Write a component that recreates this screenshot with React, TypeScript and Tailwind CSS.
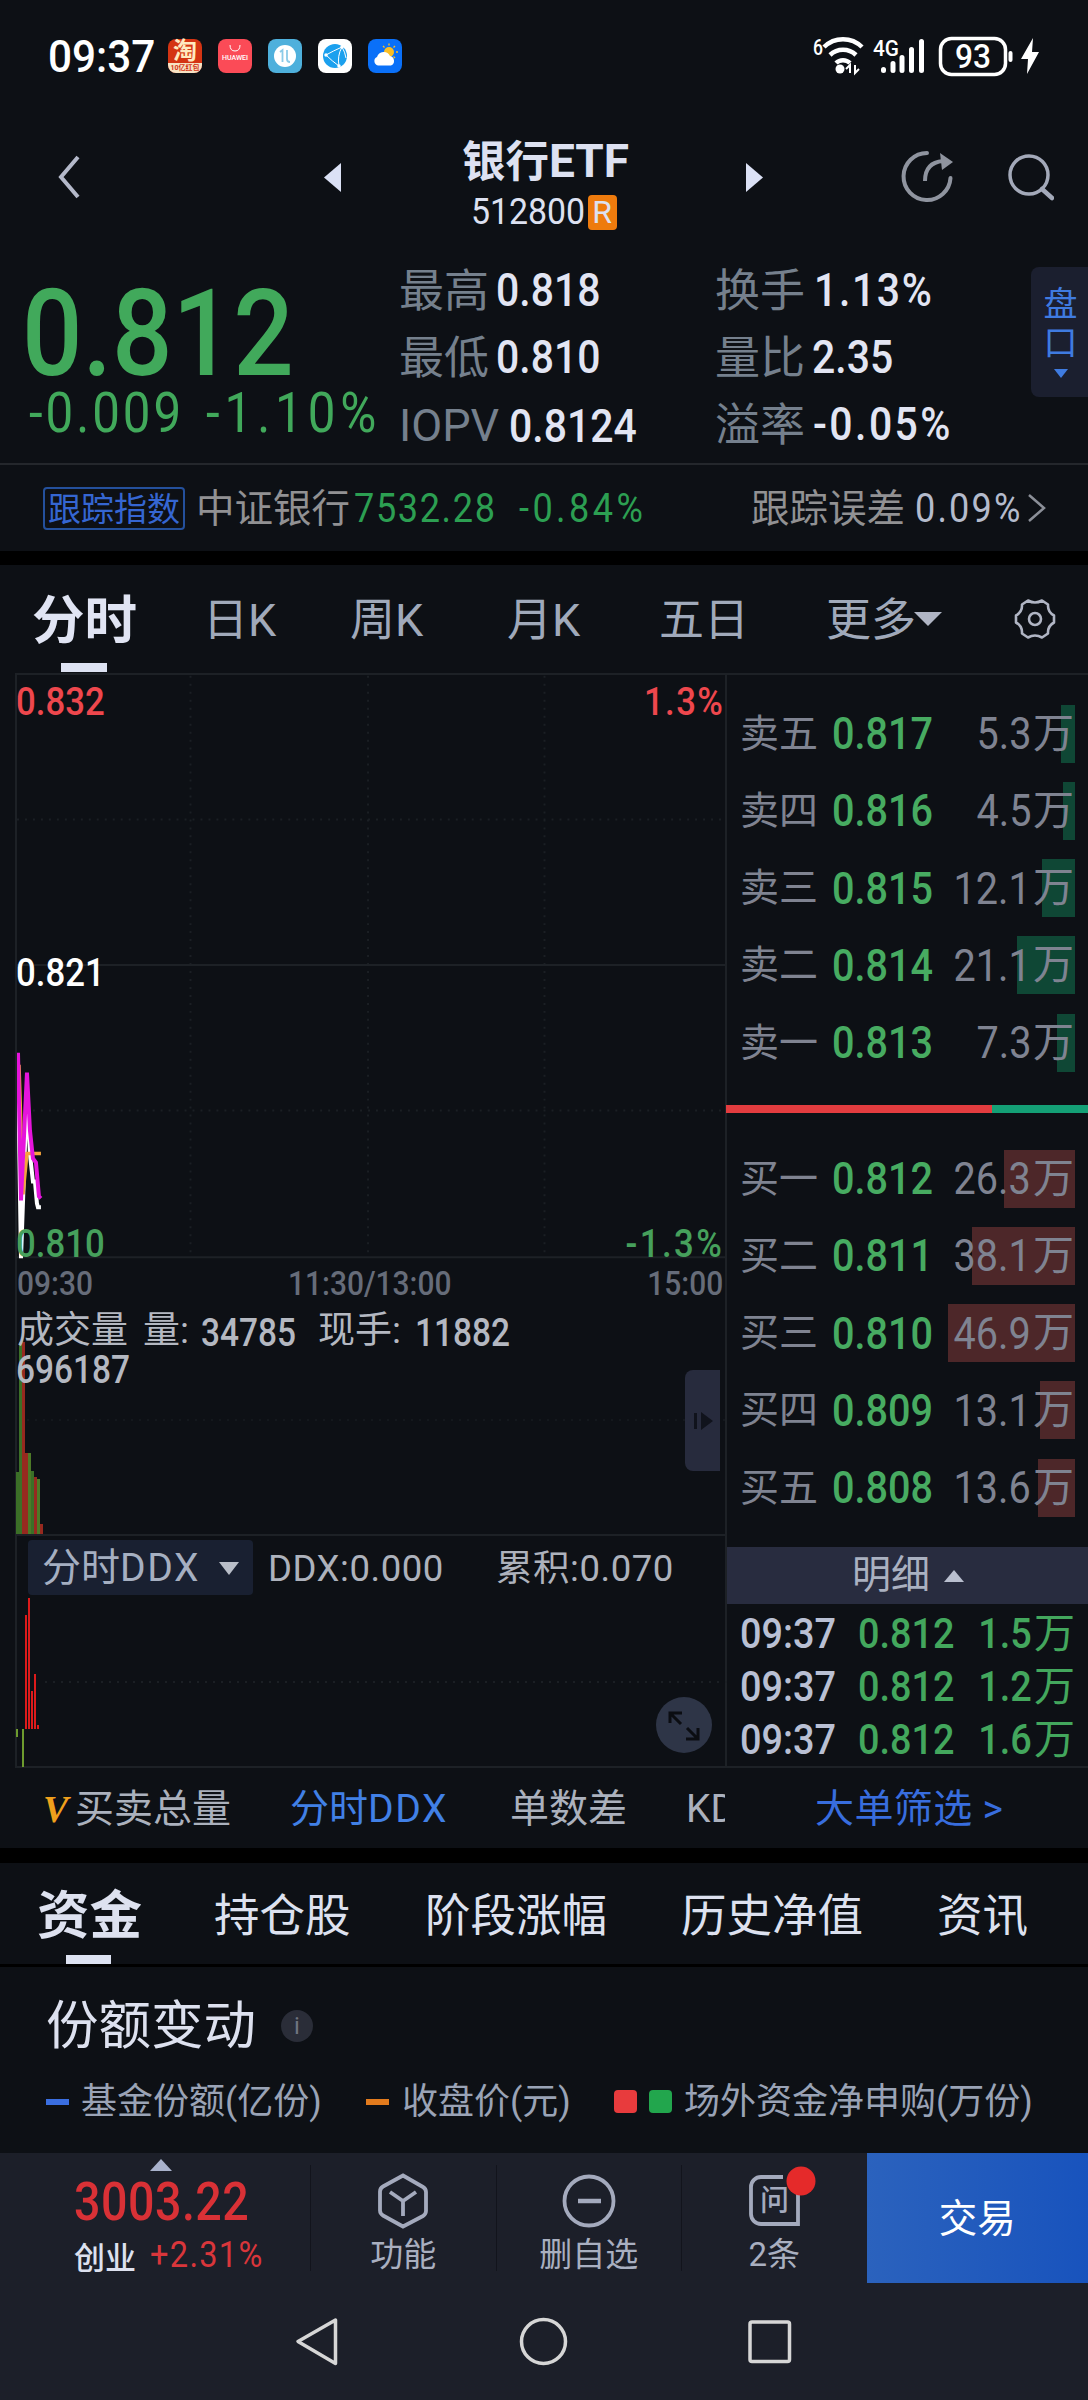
import type { ReactNode } from 'react';
import clsx from 'clsx';

type Level = { label: string; price: string; volume: string; bar: number };

const sells: Level[] = [
  { label: '卖五', price: '0.817', volume: '5.3', bar: 14 },
  { label: '卖四', price: '0.816', volume: '4.5', bar: 12 },
  { label: '卖三', price: '0.815', volume: '12.1', bar: 33 },
  { label: '卖二', price: '0.814', volume: '21.1', bar: 58 },
  { label: '卖一', price: '0.813', volume: '7.3', bar: 18 },
];

const buys: Level[] = [
  { label: '买一', price: '0.812', volume: '26.3', bar: 71 },
  { label: '买二', price: '0.811', volume: '38.1', bar: 103 },
  { label: '买三', price: '0.810', volume: '46.9', bar: 127 },
  { label: '买四', price: '0.809', volume: '13.1', bar: 35 },
  { label: '买五', price: '0.808', volume: '13.6', bar: 37 },
];

const trades = ['1.5', '1.2', '1.6'];

// [x, top, color], all bars stand on the same base line
const volumeBars: [number, number, string][] = [
  [0, 170, '#3b6f27'],
  [3, 40, '#3b6f27'],
  [6, 40, '#96291f'],
  [9, 151, '#96291f'],
  [12, 151, '#4c7a27'],
  [15, 169, '#3b6f27'],
  [18, 175, '#96291f'],
  [21, 177, '#4c7a27'],
  [24, 222, '#96291f'],
];

// condensed figures: the wrapper keeps the layout width, the inner span squeezes the glyphs
function Num({ children, className, right }: { children: ReactNode; className?: string; right?: boolean }) {
  return (
    <span className={clsx('inline-flex shrink-0 whitespace-nowrap', right && 'justify-end', className)}>
      <span className={clsx('inline-block scale-x-[.88]', right ? 'origin-right' : 'origin-left')}>{children}</span>
    </span>
  );
}

function StatusBar() {
  return (
    <header className="flex h-[112px] items-center pl-[48px] text-white">
      <span className="w-[120px] text-[45px] font-medium">
        <span className="inline-block origin-left scale-x-[.94]">09:37</span>
      </span>
      <div className="flex gap-4">
        <span className="flex size-[34px] flex-col items-center rounded-lg bg-[#d43413] text-[24px] font-bold text-[#ffe9c0]">
          淘
          <span className="flex h-2.5 w-full shrink-0 items-center justify-center rounded-b-lg bg-[#f6e3c4] text-[7px] text-[#d43413]">
            10亿红包
          </span>
        </span>
        <span className="flex size-[34px] flex-col items-center rounded-lg bg-[#fb4b57] text-[7px] font-medium">
          <svg viewBox="0 0 34 16" className="h-4 w-full" fill="none" stroke="#fff">
            <path d="M12 6 q0 6 5 6 t5 -6" />
          </svg>
          HUAWEI
        </span>
        <svg viewBox="0 0 34 34" className="size-[34px]">
          <rect width="34" height="34" rx="8" fill="#4eb0dc" />
          <circle cx="17" cy="17" r="11" fill="#fff" />
          <path d="M12 13l2.500-2v12M19 11v9q0 3 3 3" fill="none" stroke="#8ccbe8" strokeWidth="1.800" />
        </svg>
        <svg viewBox="0 0 34 34" className="size-[34px]">
          <rect width="34" height="34" rx="8" fill="#fff" />
          <circle cx="17" cy="17" r="12" fill="#1ba0ee" />
          <path d="M8 16Q15 12 24 8M8 16Q14 22 21 27M24 8Q19 17 21 27M24 8Q27 13 28 19" fill="none" stroke="#fff" />
          <path d="M8 16h.01M24 8h.01M21 27h.01" stroke="#fff" strokeWidth="3.500" strokeLinecap="round" />
        </svg>
        <svg viewBox="0 0 34 34" className="size-[34px]">
          <rect width="34" height="34" rx="8" fill="#0a70f8" />
          <circle cx="21" cy="13" r="5" fill="#fbbf24" />
          <path d="M21 4.500v2M27 7l-1.500 1.500M30 13h-2M15 7l1.500 1.500M27 19l-1.500-1.500" stroke="#fbbf24" strokeWidth="1.300" />
          <path d="M10 26.500a4.500 4.500 0 0 1-1-8.500 7 7 0 0 1 13-1 5 5 0 0 1 1 9.500z" fill="#fff" />
        </svg>
      </div>

      <svg viewBox="0 0 230 42" className="ml-[410px] h-[42px] w-[230px]" fill="none" stroke="#fff">
        <g strokeWidth="4.500">
          <path d="M12 12a27 27 0 0 1 38 0" />
          <path d="M18 20a19 19 0 0 1 26 0" />
          <path d="M24 28a10 10 0 0 1 14 0" />
        </g>
        <circle cx="28" cy="34" r="4.500" fill="#fff" stroke="none" />
        <path d="M38 38v-8l-4 4M43 30v8l4-4" strokeWidth="2" />
        <path d="M71.500 34.500v1M81 28.500v7M90 22.500v13M99.500 14.500v21M109.500 6.500v29" strokeWidth="5" strokeLinecap="round" />
        <rect x="128.500" y="3.500" width="65" height="36" rx="11" strokeWidth="3.500" />
        <path d="M198.500 18v7" strokeWidth="4" strokeLinecap="round" />
        <path d="M221 3l-12 21h7l-1 15 12-22h-7z" fill="#fff" stroke="none" />
        <g fill="#fff" stroke="none" className="font-medium">
          <text x="1" y="20" fontSize="22" textLength="10" lengthAdjust="spacingAndGlyphs">6</text>
          <text x="61" y="21" fontSize="22" textLength="26" lengthAdjust="spacingAndGlyphs">4G</text>
          <text x="143" y="33" fontSize="34" textLength="36" lengthAdjust="spacingAndGlyphs">93</text>
        </g>
      </svg>
    </header>
  );
}

function TitleBar() {
  return (
    <div className="flex h-[130px] items-center text-[#dde1f1]">
      <svg viewBox="0 0 24 44" className="ml-[57px] h-[44px] w-6" fill="none" stroke="#b4b9ca" strokeWidth="4">
        <path d="M21 2L4 22l17 20" />
      </svg>
      <svg viewBox="0 0 17 29" className="ml-[243px] h-[29px] w-[17px]" fill="#dbe1f5">
        <path d="M17 0v29L0 14.500z" />
      </svg>
      <div className="flex w-[405px] flex-col items-center">
        <h1 className="mt-[14px] ml-1 text-[43.500px] font-bold">
          银行<span className="text-[46px]">ETF</span>
        </h1>
        <div className="mt-[10px] flex items-center">
          <span className="inline-block w-[117px] text-[36px]">
            <span className="inline-block origin-left scale-x-[.94]">512800</span>
          </span>
          <span className="flex h-[35px] w-[29px] items-center justify-center rounded-sm bg-[#ee7b0d] text-[32px]">R</span>
        </div>
      </div>
      <svg viewBox="0 0 17 29" className="h-[29px] w-[17px]" fill="#dbe1f5">
        <path d="M0 0v29l17-14.500z" />
      </svg>
      <svg viewBox="0 0 54 54" className="ml-[137px] size-[54px]" fill="none" stroke="#8f949f" strokeWidth="4">
        <path d="M27 3a23.500 23.500 0 1 0 23.500 25" strokeLinecap="round" />
        <path d="M25 31c0-12 6-19 18-20" />
        <path d="M40 3l13 9-11 8z" fill="#8f949f" stroke="none" />
      </svg>
      <svg viewBox="0 0 48 48" className="ml-[52px] size-12" fill="none" stroke="#a3a9b9" strokeWidth="3.500">
        <circle cx="23" cy="22" r="19" />
        <path d="M36 36l10 9" strokeWidth="4.500" strokeLinecap="round" />
      </svg>
    </div>
  );
}

function Stat({ label, value, shift }: { label: string; value: string; shift?: string }) {
  return (
    <div className="flex h-[67px] items-center">
      <span className="pt-0.5 text-[45px] text-[#75808d]">{label}</span>
      <Num className={clsx('text-[46.500px] font-medium', shift ?? 'ml-[7px]')}>{value}</Num>
    </div>
  );
}

function Quote() {
  return (
    <section className="flex h-[221px] pt-[15px] text-[#e2e5f3]">
      <div className="w-[398px] pl-[22px] text-[#41a95b]">
        <Num className="mt-[29px] text-[121px] leading-[97px] font-medium">0.812</Num>
        <div className="flex pt-0.5 pl-[7px] text-[56px]">
          <Num className="w-[177px] tracking-[.06em]">-0.009</Num>
          <Num className="tracking-[.1em]">-1.10%</Num>
        </div>
      </div>
      <div className="w-[317px] pl-px">
        <Stat label="最高" value="0.818" />
        <Stat label="最低" value="0.810" />
        <Stat label="IOPV" value="0.8124" shift="ml-[10px] mt-1" />
      </div>
      <div className="w-[316px]">
        <Stat label="换手" value="1.13%" shift="ml-[9px] tracking-[.04em]" />
        <Stat label="量比" value="2.35" />
        <Stat label="溢率" value="-0.05%" shift="ml-[8px] tracking-[.06em]" />
      </div>
      <div className="mt-[10px] flex h-[130px] w-[57px] flex-col items-center rounded-l-lg bg-[#1b1f2f] pt-[20px] pl-0.5 text-[34px] text-[#3f7be0]">
        <span>盘</span>
        <span className="mt-[5px]">口</span>
        <svg viewBox="0 0 14 9" className="mt-[9px] h-[9px] w-[14px]" fill="currentColor">
          <path d="M0 0h14L7 9z" />
        </svg>
      </div>
    </section>
  );
}

function IndexRow() {
  return (
    <div className="flex h-[88px] items-center border-t-2 border-[#24272c] pl-[43px] text-[38.500px] text-[#919193]">
      <span className="flex h-[43px] w-[142px] items-center justify-center rounded-sm border-2 border-[#24509c] pt-0.5 text-[33px] text-[#3566d2]">
        跟踪指数
      </span>
      <span className="ml-[11px] w-[158px] pt-0.5">中证银行</span>
      <Num className="w-[165px] text-[41px] tracking-[.045em] text-[#2c9f52]">7532.28</Num>
      <Num className="w-[232px] text-[41px] tracking-[.095em] text-[#2c9f52]">-0.84%</Num>
      <span className="w-[164px] pt-0.5">跟踪误差</span>
      <Num className="w-[112px] text-[41px] tracking-[.06em] text-[#b4bbcc]">0.09%</Num>
      <svg viewBox="0 0 20 30" className="h-[30px] w-5" fill="none" stroke="#8b8f98" strokeWidth="2.500">
        <path d="M2 2l15 13L2 28" />
      </svg>
    </div>
  );
}

function PeriodTabs() {
  return (
    <nav className="flex h-[108px] items-center pl-[32px] text-[45px] text-[#a0a9ba]">
      <span className="relative w-[171px] pt-1 text-[52.500px] font-bold text-[#e0e4f3]">
        分时
        <i className="absolute top-[72px] left-[29px] h-[9px] w-[46px] bg-[#dde2f2]" />
      </span>
      <span className="w-[147px] pt-0.5">日K</span>
      <span className="w-[157px] pt-0.5">周K</span>
      <span className="w-[152px] pt-0.5">月K</span>
      <span className="w-[167px] pt-0.5">五日</span>
      <span className="pt-0.5">更多</span>
      <svg viewBox="0 0 28 14" className="-ml-0.5 h-[14px] w-7" fill="#b0b5c4">
        <path d="M0 0h28L14 14z" />
      </svg>
      <svg viewBox="0 0 42 42" className="ml-[72px] size-[42px]" fill="none" stroke="#b0b5c4" strokeWidth="2.600" strokeLinejoin="round">
        <path d="M14 2.500 Q21 6.500 28 2.500 L34 6.500 Q33.500 14 40 17.500 V24.500 Q33.500 28 34 35.500 L28 39.500 Q21 35.500 14 39.500 L8 35.500 Q8.500 28 2 24.500 V17.500 Q8.500 14 8 6.500 Z" />
        <circle cx="21" cy="21" r="6" />
      </svg>
    </nav>
  );
}

function PriceChart() {
  return (
    <div className="relative h-[585px] text-[39.500px] font-medium">
      <svg viewBox="0 0 710 585" className="h-full w-full" fill="none">
        <g stroke="#1b1f24" strokeWidth="2" strokeDasharray="2 6">
          <path d="M0 144h710M0 436h710M174 0v584M352 0v584M529 0v584" />
        </g>
        <path d="M0 290h710M0 583h710" stroke="#1d2126" strokeWidth="2" />
        <path d="M1 397L4 584 10 415l3 65 3 27h2l2 22 1 4h3" stroke="#fff" strokeWidth="4" />
        <path d="M2 390l4 130 4-41h14" stroke="#f5a43c" strokeWidth="3.500" />
        <path d="M1 378L4 526 10 398l3 58 3 28 3 4 3 34 2 2" stroke="#e614dc" strokeWidth="4" />
      </svg>
      <Num className="absolute top-[7px] -left-px text-[#ee474d]">0.832</Num>
      <Num className="absolute top-[7px] right-px tracking-[.04em] text-[#ee474d]" right>1.3%</Num>
      <Num className="absolute top-[278px] -left-px text-white">0.821</Num>
      <Num className="absolute top-[549px] -left-px text-[#46a05c]">0.810</Num>
      <Num className="absolute top-[549px] right-px tracking-[.07em] text-[#46a05c]" right>-1.3%</Num>
    </div>
  );
}

function VolumeChart() {
  return (
    <div className="relative h-[234px] border-b-2 border-[#1d2126] text-[37px] text-[#b4b8c1]">
      <svg viewBox="0 0 710 232" className="absolute inset-0 h-[232px] w-[710px] overflow-visible">
        <path d="M10 118h700" stroke="#14181d" strokeWidth="2" strokeDasharray="2 6" />
        {volumeBars.map(([x, top, color]) => (
          <rect key={x} x={x - 1} y={top} width="3" height={232 - top} fill={color} />
        ))}
      </svg>
      <div className="relative flex items-center pt-[6px]">
        <span className="w-[126px]">成交量</span>
        <span className="w-[58px]">量:</span>
        <Num className="mt-[6px] w-[117px] text-[38px] font-medium">34785</Num>
        <span className="w-[97px]">现手:</span>
        <Num className="mt-[6px] text-[38px] font-medium">11882</Num>
      </div>
      <Num className="relative -mt-px -ml-px text-[38px] font-medium">696187</Num>
      <span className="absolute top-[68px] right-[5px] flex h-[101px] w-[35px] items-center justify-center rounded-l-lg bg-[#272b3d]">
        <svg viewBox="0 0 22 18" className="h-[18px] w-[22px]" fill="#10131c">
          <path d="M2 1h3v16H2zM9 0l12 9-12 9z" />
        </svg>
      </span>
    </div>
  );
}

function DdxChart() {
  return (
    <div className="relative h-[232px] border-b-2 border-[#1d2126] text-[36.500px] text-[#adb2bc]">
      <svg viewBox="0 0 710 230" className="absolute inset-0 h-[230px] w-[710px] overflow-visible">
        <path d="M28 146h682" stroke="#1b1f24" strokeWidth="2" strokeDasharray="2 6" />
        <path d="M9 79v114M12 62v131M15 155v38M18 138v55M21 189v4" stroke="#dd1b1b" strokeWidth="2" />
        <path d="M0 193v8M6 193v38" stroke="#6d9b2e" strokeWidth="2" />
      </svg>
      <div className="relative flex items-center pt-[4px] pl-[11px]">
        <span className="flex h-[55px] w-[225px] items-center justify-between rounded-sm bg-[#192031] pt-0.5 pr-[14px] pl-[14px] text-[39px] text-[#a5afc1]">
          <span>
            分时<span className="tracking-[.04em]">DDX</span>
          </span>
          <svg viewBox="0 0 20 13" className="h-[13px] w-5" fill="#b9bec8">
            <path d="M0 0h20L10 13z" />
          </svg>
        </span>
        <span className="ml-[15px] w-[228px] pt-1 tracking-[.015em]">DDX:0.000</span>
        <span className="pt-1 tracking-[.015em]">累积:0.070</span>
      </div>
      <svg viewBox="0 0 56 56" className="absolute top-[161px] right-[13px] size-14" fill="none" stroke="#0b0d12" strokeWidth="3">
        <circle cx="28" cy="28" r="28" fill="#2e3547" stroke="none" />
        <path d="M14 26V16h12M15 17l10 10M42 31v11H30M41 41L31 31" />
      </svg>
    </div>
  );
}

function Book({ levels, sell }: { levels: Level[]; sell?: boolean }) {
  return (
    <ul>
      {levels.map(({ label, price, volume, bar }) => (
        <li key={label} className="relative flex h-[77.250px] items-center pl-[13px] text-[45px] text-[#7f8391]">
          <span
            className={clsx('absolute right-[13px] h-[58px]', sell ? 'bg-[#0f4735]' : 'bg-[#4d2729]')}
            style={{ width: bar }}
          />
          <span className="relative w-[92px] pt-px text-[39px]">{label}</span>
          <Num className="relative w-[105px] font-medium text-[#47ab61]">{price}</Num>
          <Num className="relative w-[94px]" right>{volume}</Num>
          <span className="relative ml-0.5 pt-px text-[41px]">万</span>
        </li>
      ))}
    </ul>
  );
}

function MarketDepth() {
  return (
    <aside className="flex w-[363px] flex-col border-t-2 border-l-2 border-[#1d2126]">
      <div className="h-[430px] pt-[20px]">
        <Book levels={sells} sell />
      </div>
      <div className="-ml-px flex h-2">
        <i className="w-[266px] bg-[#e23c3f]" />
        <i className="flex-1 bg-[#14a076]" />
      </div>
      <div className="h-[434px] pt-[27px]">
        <Book levels={buys} />
      </div>
      <div className="flex h-[57px] items-center bg-[#282c3f] pl-[125px] text-[39px] text-[#aab1c1]">
        明细
        <svg viewBox="0 0 20 12" className="ml-[14px] h-3 w-5" fill="#b9bfcf">
          <path d="M0 12h20L10 0z" />
        </svg>
      </div>
      <ul className="h-[164px] border-b-2 border-[#1d2126] pt-[3px] text-[43px] text-[#43a75d]">
        {trades.map((v) => (
          <li key={v} className="flex h-[53px] items-center pl-[13px]">
            <Num className="w-[118px] font-medium text-[#b9c0d4]">09:37</Num>
            <Num className="w-[110px] font-medium">0.812</Num>
            <Num className="w-[64px] font-medium" right>{v}</Num>
            <span className="ml-0.5 pt-px text-[41px]">万</span>
          </li>
        ))}
      </ul>
    </aside>
  );
}

function IndicatorTabs() {
  return (
    <div className="flex h-[80px] items-center pt-0.5 pl-[43px] text-[39px] text-[#abb1bd]">
      <span className="w-8 font-['Liberation_Serif',serif] text-[38px] font-bold text-[#f0a01c] italic">V</span>
      <span className="w-[215px]">买卖总量</span>
      <span className="w-[220px] text-[#4180e6]">
        分时<span className="tracking-[.04em]">DDX</span>
      </span>
      <span className="w-[176px]">单数差</span>
      <span className="w-[39px] overflow-hidden">KDJ</span>
      <span className="ml-[90px] tracking-[.01em] text-[#386dde]">大单筛选 &gt;</span>
    </div>
  );
}

function FundTabs() {
  return (
    <nav className="flex h-[104px] items-center border-b-[3px] border-black pt-[6px] pl-[37px] text-[45.500px] text-[#dde1ef]">
      <span className="relative w-[177px] text-[52.500px] font-bold">
        资金
        <i className="absolute top-[65px] left-[29px] h-[9px] w-[45px] bg-[#dde2f2]" />
      </span>
      <span className="w-[211px]">持仓股</span>
      <span className="w-[256px]">阶段涨幅</span>
      <span className="w-[256px]">历史净值</span>
      <span>资讯</span>
    </nav>
  );
}

function ShareChange() {
  return (
    <section className="h-[186px] text-[#dde1ef]">
      <div className="flex items-center pt-[33px] pl-[46px] text-[52.500px]">
        份额变动
        <span className="ml-[25px] flex size-8 items-center justify-center rounded-full bg-[#2a2d38] text-[24px] text-[#6f7480]">i</span>
      </div>
      <div className="mt-[31px] flex items-center pl-[46px] text-[36px] text-[#9aa3b6]">
        <i className="mr-[12px] h-[6px] w-[23px] bg-[#3a6ee0]" />
        <span className="w-[285px]">基金份额(亿份)</span>
        <i className="mr-[13px] h-[6px] w-[23px] bg-[#e27b1d]" />
        <span className="w-[212px]">收盘价(元)</span>
        <i className="mr-3 size-[23px] rounded-sm bg-[#e83b3d]" />
        <i className="mr-[12px] size-[23px] rounded-sm bg-[#22a64d]" />
        <span className="whitespace-nowrap">场外资金净申购(万份)</span>
      </div>
    </section>
  );
}

function FooterItem({ label, children }: { label: string; children: ReactNode }) {
  return (
    <div className="flex w-[185.500px] flex-col items-center border-l border-[#12141c] text-[33px] text-[#a9afc0]">
      <svg viewBox="0 0 60 60" className="mt-[4px] mb-[9px] size-[60px] overflow-visible" fill="none" stroke="#a4aabd" strokeWidth="3.800">
        {children}
      </svg>
      {label}
    </div>
  );
}

function Footer() {
  return (
    <footer className="h-[247px] bg-[#1c1f29]">
      <div className="flex h-[130px]">
        <div className="relative w-[310px] pt-[23px] pl-[74px]">
          <svg viewBox="0 0 22 12" className="absolute top-[6px] left-[150px] h-3 w-[22px]" fill="#a9b2cc">
            <path d="M0 12h22L11 0z" />
          </svg>
          <Num className="text-[53px] font-medium tracking-[.01em] text-[#d93136]">3003.22</Num>
          <div className="mt-[10px] flex items-center">
            <span className="w-[76px] pt-1 text-[31px] font-medium text-[#dde1ef]">创业</span>
            <Num className="-mt-1 text-[37px] tracking-[.04em] text-[#d9363b]">+2.31%</Num>
          </div>
        </div>
        <div className="flex py-[12px]">
          <FooterItem label="功能">
            <path d="M30 6l20 11.500a6 6 0 0 1 3 5v19a6 6 0 0 1-3 5L30 57 10 46a6 6 0 0 1-3-5V22a6 6 0 0 1 3-5z" transform="translate(0 .5)" />
            <path d="M17 23l13 9 13-9M30 32v15" />
          </FooterItem>
          <FooterItem label="删自选">
            <circle cx="30" cy="32" r="24.500" />
            <path d="M19 32h23" strokeWidth="4.500" />
          </FooterItem>
          <FooterItem label="2条">
            <path d="M54 24v31H17a10 10 0 0 1-10-10V18A10 10 0 0 1 17 8h22" />
            <text x="16" y="42" fontSize="29" fill="#a4aabd" stroke="none" className="font-medium">问</text>
            <circle cx="57" cy="12" r="14.500" fill="#e52a2a" stroke="none" />
          </FooterItem>
        </div>
        <button className="flex flex-1 items-center justify-center bg-gradient-to-r from-[#2b62bd] to-[#1853bd] pt-0.5 text-[38.500px] text-white">
          交易
        </button>
      </div>
      <svg viewBox="0 0 1088 117" className="h-[117px] w-full" fill="none" stroke="#d6d6d6" strokeWidth="3.500" strokeLinejoin="round">
        <path d="M335.500 37v43.500L298 58.500z" />
        <circle cx="543.500" cy="58.500" r="22" />
        <rect x="750" y="39" width="39.500" height="39.500" rx="2" />
      </svg>
    </footer>
  );
}

export default function App() {
  return (
    <main className="w-[1088px] overflow-hidden bg-[#0d1015] font-['Roboto','Noto_Sans_CJK_SC',sans-serif] leading-none whitespace-nowrap">
      <StatusBar />
      <TitleBar />
      <Quote />
      <IndexRow />
      <div className="h-[14px] bg-black" />
      <PeriodTabs />
      <div className="flex h-[1095px]">
        <div className="ml-[15px] w-[710px] border-t-2 border-l-2 border-[#1d2126]">
          <PriceChart />
          <div className="flex h-[42px] items-center justify-between pt-1 pr-0.5 text-[34px] text-[#666c79]">
            <Num className="w-[75px] font-medium">09:30</Num>
            <Num className="w-[164px] font-medium">11:30/13:00</Num>
            <Num className="w-[75px] font-medium" right>15:00</Num>
          </div>
          <VolumeChart />
          <DdxChart />
        </div>
        <MarketDepth />
      </div>
      <IndicatorTabs />
      <div className="h-[15px] bg-black" />
      <FundTabs />
      <ShareChange />
      <Footer />
    </main>
  );
}
